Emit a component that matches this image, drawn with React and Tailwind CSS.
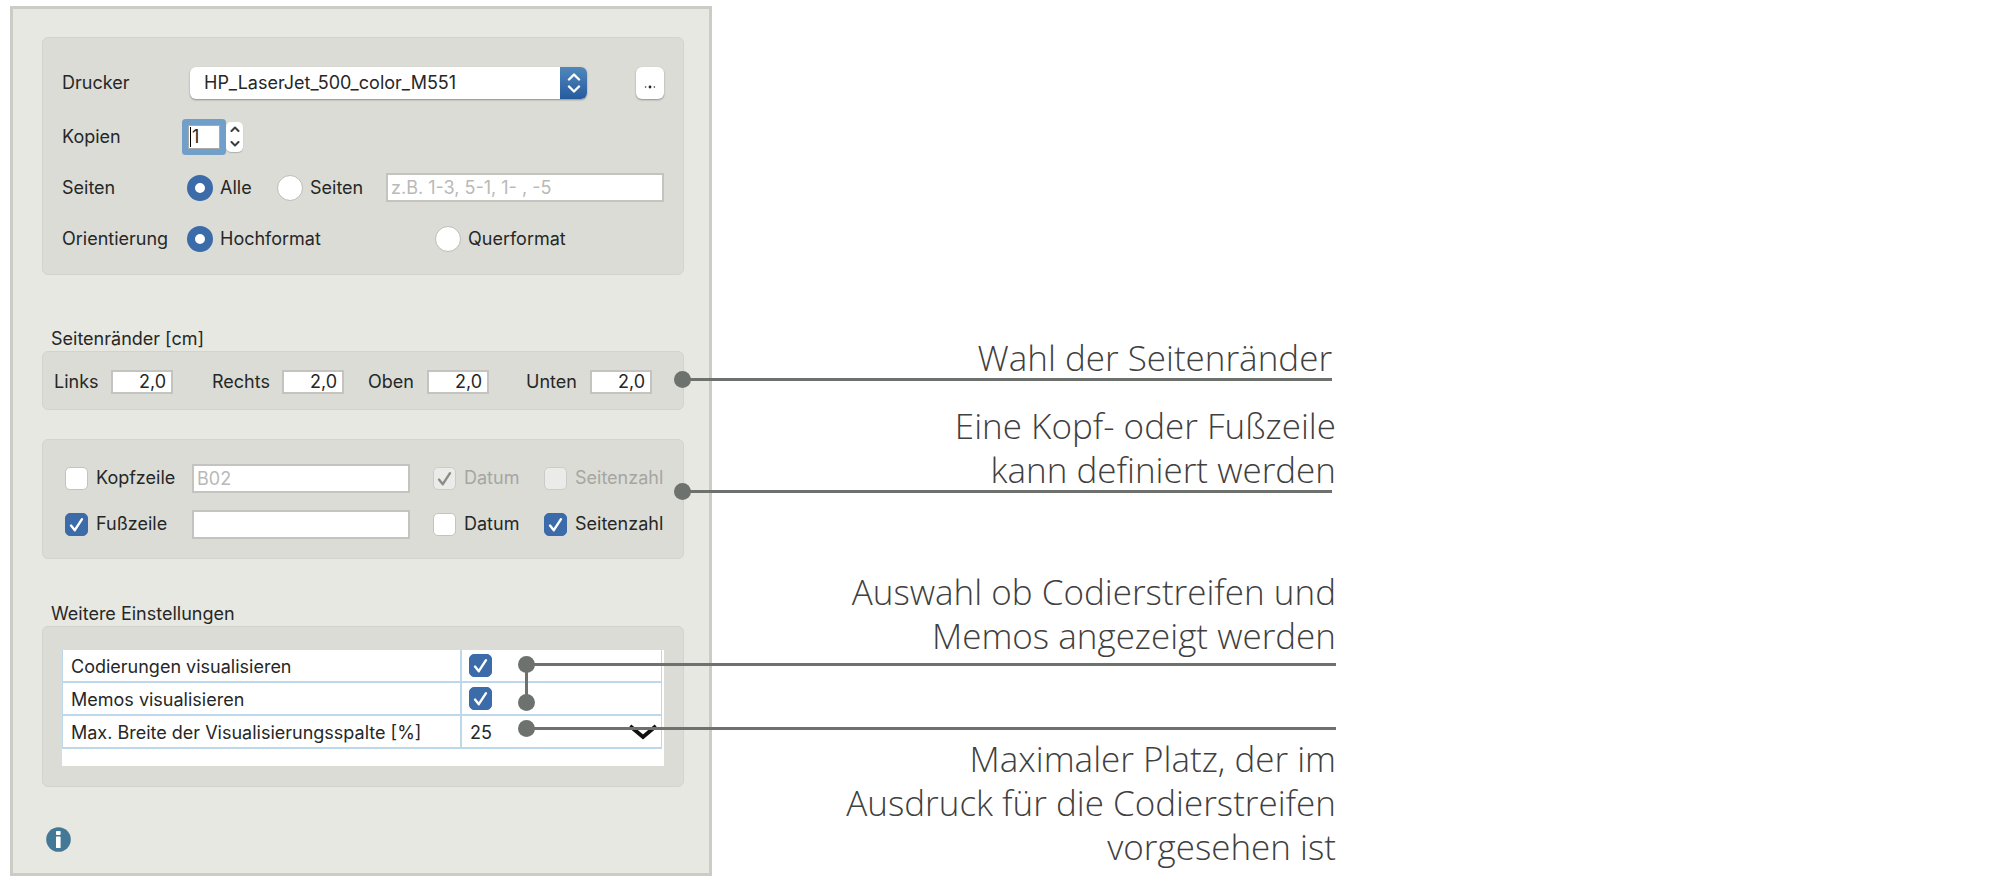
import React, { useState } from "react";

const Group = ({ children, className = "" }) => (
  <div className={`rounded-md border border-[#d2d3cd] bg-[#dbdcd6] ${className}`}>{children}</div>
);

const GroupTitle = ({ children, className = "" }) => (
  <h2 className={`pl-[9px] ${className}`}>{children}</h2>
);

const Checkbox = ({ className = "", ...props }) => (
  <span className={`grid h-[23px] w-[23px] shrink-0 ${className}`}>
    <input
      type="checkbox"
      className="peer col-start-1 row-start-1 h-[23px] w-[23px] appearance-none rounded-[5px] border border-[#c3c4be] bg-white checked:border-[#3b6ba9] checked:bg-[#3b6ba9] disabled:border-[#cbccc7] disabled:bg-[#ebebe9]"
      {...props}
    />
    <svg
      viewBox="0 0 23 23"
      className="pointer-events-none invisible col-start-1 row-start-1 h-[23px] w-[23px] text-white peer-checked:visible peer-disabled:text-[#8b8c88]"
    >
      <path d="M6 12.6 L9.8 17.2 L17 6.2" fill="none" stroke="currentColor" strokeWidth="2.4" strokeLinecap="round" strokeLinejoin="round" />
    </svg>
  </span>
);

const CheckLabel = ({ label, className = "", ...props }) => (
  <label className={`flex shrink-0 items-center gap-2 ${props.disabled ? "text-[#a5a6a2]" : ""} ${className}`}>
    <Checkbox {...props} />
    {label}
  </label>
);

const Radio = ({ label, className = "", ...props }) => (
  <label className={`flex shrink-0 items-center gap-[7px] ${className}`}>
    <input
      type="radio"
      className="h-[26px] w-[26px] shrink-0 appearance-none rounded-full border border-[#bcbdb8] bg-white checked:border-8 checked:border-[#3b6ba9]"
      {...props}
    />
    {label}
  </label>
);

const TextField = ({ className = "", ...props }) => (
  <input
    type="text"
    className={`min-w-0 border-2 border-[#c3c4bf] bg-white outline-none placeholder:text-[#b9b9b7] ${className}`}
    {...props}
  />
);

const Dot = ({ className = "" }) => (
  <span className={`absolute h-[17px] w-[17px] rounded-full bg-[#6e726e] ${className}`} />
);

// Line from a callout back to the dialog, it starts with a dot
const Leader = ({ children, className = "" }) => (
  <div className={`relative h-[3px] bg-[#6e726e] ${className}`}>
    <Dot className="-left-2 -top-[7px]" />
    {children}
  </div>
);

const Callout = ({ lines, className = "" }) => (
  <p className={`text-right leading-[44px] ${className}`}>
    {lines.map((line) => (
      <span key={line} className="block whitespace-nowrap">{line}</span>
    ))}
  </p>
);

const margins = ["Links", "Rechts", "Oben", "Unten"];

export default function App() {
  const [copies, setCopies] = useState(1);
  const [pages, setPages] = useState("alle");
  const [orientation, setOrientation] = useState("hoch");

  return (
    <div className="flex min-h-screen items-start bg-white pl-[10px] pt-1.5 font-['Inter',sans-serif] text-[18px] leading-6 text-[#262727]">
      <main className="min-w-0 max-w-[702px] flex-1 border-[3px] border-[#cbccc6] bg-[#e7e8e2] pb-[21px] pl-[29px] pr-[25px] pt-7">
        <Group className="px-[19px] pb-[10px] pt-[19px]">
          <div className="mb-[3px] flex h-[51px] items-center">
            <label htmlFor="printer" className="w-32 shrink-0">Drucker</label>
            <div className="relative mr-[49px] min-w-0 flex-1">
              <select id="printer" className="block h-8 w-full appearance-none rounded-md bg-white pl-3.5 pr-8 shadow-[0_1px_2px_rgba(0,0,0,0.35)] outline-none">
                <option>HP_LaserJet_500_color_M551</option>
              </select>
              <span className="pointer-events-none absolute right-0 top-0 flex h-8 w-[27px] items-center justify-center rounded-r-md bg-linear-to-b from-[#5088bb] to-[#265a9e]">
                <svg viewBox="0 0 14 20" className="h-5 w-3.5" fill="none" stroke="white" strokeWidth="2.4" strokeLinecap="round" strokeLinejoin="round">
                  <path d="M2 6.5 L7 1.5 L12 6.5 M2 13.5 L7 18.5 L12 13.5" />
                </svg>
              </span>
            </div>
            <button aria-label="Druckereinstellungen" className="flex h-8 w-7 items-center justify-center rounded-md bg-white pt-2 shadow-[0_1px_2px_rgba(0,0,0,0.35)]">
              <svg viewBox="0 0 12 4" className="h-1 w-3" fill="#262727">
                <circle cx="1.6" cy="2" r="0.8" />
                <circle cx="6" cy="2" r="1.4" />
                <circle cx="10.4" cy="2" r="0.8" />
              </svg>
            </button>
          </div>

          <div className="flex h-[51px] items-center">
            <label htmlFor="copies" className="w-[126px] shrink-0">Kopien</label>
            <div className="relative mr-1.5 flex">
              <input
                id="copies"
                type="text"
                value={copies}
                onChange={(e) => setCopies(Number(e.target.value) || 1)}
                className="h-6 w-8 rounded-[1px] border border-[#a9a9a6] bg-white pl-[3px] shadow-[0_0_0_6px_#719fca] outline-none"
              />
              <span className="absolute left-0.5 top-0.5 h-5 w-px bg-black" />
            </div>
            <div className="flex h-[30px] w-[17px] flex-col rounded-[5px] bg-white shadow-[0_1px_1px_rgba(0,0,0,0.2)]">
              <button aria-label="Mehr Kopien" onClick={() => setCopies(copies + 1)} className="flex flex-1 items-center justify-center">
                <svg viewBox="0 0 10 6" className="h-1.5 w-2.5" fill="none" stroke="#3c3c3c" strokeWidth="2" strokeLinecap="round" strokeLinejoin="round">
                  <path d="M1.5 5 L5 1.5 L8.5 5" />
                </svg>
              </button>
              <button aria-label="Weniger Kopien" onClick={() => setCopies(Math.max(1, copies - 1))} className="flex flex-1 items-center justify-center">
                <svg viewBox="0 0 10 6" className="h-1.5 w-2.5" fill="none" stroke="#3c3c3c" strokeWidth="2" strokeLinecap="round" strokeLinejoin="round">
                  <path d="M1.5 1 L5 4.5 L8.5 1" />
                </svg>
              </button>
            </div>
          </div>

          <div className="flex h-[51px] items-center">
            <span className="w-[125px] shrink-0">Seiten</span>
            <Radio label="Alle" name="pages" checked={pages === "alle"} onChange={() => setPages("alle")} className="w-[90px]" />
            <Radio label="Seiten" name="pages" checked={pages === "seiten"} onChange={() => setPages("seiten")} className="w-[109px]" />
            <TextField aria-label="Seitenbereich" placeholder="z.B. 1-3, 5-1, 1- , -5" className="h-[29px] flex-1 pl-[3px]" />
          </div>

          <div className="flex h-[51px] items-center">
            <span className="w-[125px] shrink-0">Orientierung</span>
            <Radio label="Hochformat" name="orientation" checked={orientation === "hoch"} onChange={() => setOrientation("hoch")} className="w-[248px]" />
            <Radio label="Querformat" name="orientation" checked={orientation === "quer"} onChange={() => setOrientation("quer")} />
          </div>
        </Group>

        <GroupTitle className="mt-[52px]">Seitenränder [cm]</GroupTitle>
        <Group className="grid grid-cols-[57px_101px_70px_86px_59px_99px_64px_62px] items-center pb-[15px] pl-[11px] pt-[18px]">
          {margins.map((m) => (
            <React.Fragment key={m}>
              <label htmlFor={m}>{m}</label>
              <TextField id={m} defaultValue="2,0" className="h-6 w-[62px] pr-[5px] text-right" />
            </React.Fragment>
          ))}
        </Group>

        <Group className="mt-[29px] pb-[11px] pl-[22px] pr-[19px] pt-[15px]">
          <div className="flex h-[46px] items-center">
            <CheckLabel label="Kopfzeile" className="w-[127px]" />
            <TextField aria-label="Text der Kopfzeile" placeholder="B02" className="h-[29px] flex-1 pl-[3px]" />
            <CheckLabel label="Datum" defaultChecked disabled className="ml-[23px] w-[111px]" />
            <CheckLabel label="Seitenzahl" disabled className="w-[120px]" />
          </div>
          <div className="flex h-[46px] items-center">
            <CheckLabel label="Fußzeile" defaultChecked className="w-[127px]" />
            <TextField aria-label="Text der Fußzeile" className="h-[29px] flex-1 pl-[3px]" />
            <CheckLabel label="Datum" className="ml-[23px] w-[111px]" />
            <CheckLabel label="Seitenzahl" defaultChecked className="w-[120px]" />
          </div>
        </Group>

        <GroupTitle className="mt-[43px]">Weitere Einstellungen</GroupTitle>
        <Group className="px-[19px] pb-5 pt-[23px]">
          <div className="bg-white pb-[17px] pr-0.5">
            <table className="w-full table-fixed border-separate border-spacing-0 border-l border-r border-[#bcd8ea]">
              <colgroup>
                <col className="w-[399px]" />
                <col />
              </colgroup>
              <tbody>
                <tr className="h-[33px]">
                  <td className="border-b-2 border-r-2 border-[#bcd8ea] pl-2 pt-0.5">
                    <label htmlFor="codings">Codierungen visualisieren</label>
                  </td>
                  <td className="border-b-2 border-[#bcd8ea] pl-[7px]">
                    <Checkbox id="codings" defaultChecked />
                  </td>
                </tr>
                <tr className="h-[33px]">
                  <td className="border-b-2 border-r-2 border-[#bcd8ea] pl-2 pt-0.5">
                    <label htmlFor="memos">Memos visualisieren</label>
                  </td>
                  <td className="border-b-2 border-[#bcd8ea] pl-[7px]">
                    <Checkbox id="memos" defaultChecked />
                  </td>
                </tr>
                <tr className="h-[33px]">
                  <td className="border-b-2 border-r-2 border-[#bcd8ea] pl-2 pt-0.5">
                    <label htmlFor="width" className="whitespace-nowrap">Max. Breite der Visualisierungsspalte [%]</label>
                  </td>
                  <td className="border-b-2 border-[#bcd8ea]">
                    <div className="relative">
                      <select id="width" className="block h-[31px] w-full appearance-none bg-white pl-2 pt-0.5 outline-none">
                        <option>25</option>
                      </select>
                      <svg viewBox="0 0 28 16" className="pointer-events-none absolute right-1 top-2 h-4 w-7">
                        <path d="M1 2 L14 13 L27 2" fill="none" stroke="#111" strokeWidth="4" />
                      </svg>
                    </div>
                  </td>
                </tr>
              </tbody>
            </table>
          </div>
        </Group>

        <button aria-label="Info" className="ml-1 mt-10 block h-[25px] w-[25px]">
          <svg viewBox="0 0 25 25" className="h-[25px] w-[25px]">
            <circle cx="12.5" cy="12.5" r="12.3" fill="#437897" />
            <rect x="10" y="4" width="4.6" height="4" rx="0.8" fill="white" />
            <rect x="10" y="9.5" width="4.6" height="11.5" rx="0.6" fill="white" />
          </svg>
        </button>
      </main>

      <aside className="relative min-w-0 max-w-[624px] flex-1 pt-[330px] font-['Open_Sans',sans-serif] text-[35px] font-light text-[#3f4040]">
        <Callout lines={["Wahl der Seitenränder"]} className="pr-1" />
        <Leader className="-ml-[30px] -mt-0.5 mr-1" />

        <Callout lines={["Eine Kopf- oder Fußzeile", "kann definiert werden"]} className="mt-[23px]" />
        <Leader className="-ml-[30px] -mt-0.5 mr-1" />

        <Callout lines={["Auswahl ob Codierstreifen und", "Memos angezeigt werden"]} className="mt-[77px]" />
        <Leader className="-ml-[186px] mt-[5px]">
          <span className="absolute -left-px top-0 h-[38px] w-[3px] bg-[#6e726e]" />
          <Dot className="-left-2 top-[31px]" />
        </Leader>

        <Leader className="-ml-[186px] mt-[61px]" />
        <Callout lines={["Maximaler Platz, der im", "Ausdruck für die Codierstreifen", "vorgesehen ist"]} className="mt-[7px]" />
      </aside>
    </div>
  );
}
